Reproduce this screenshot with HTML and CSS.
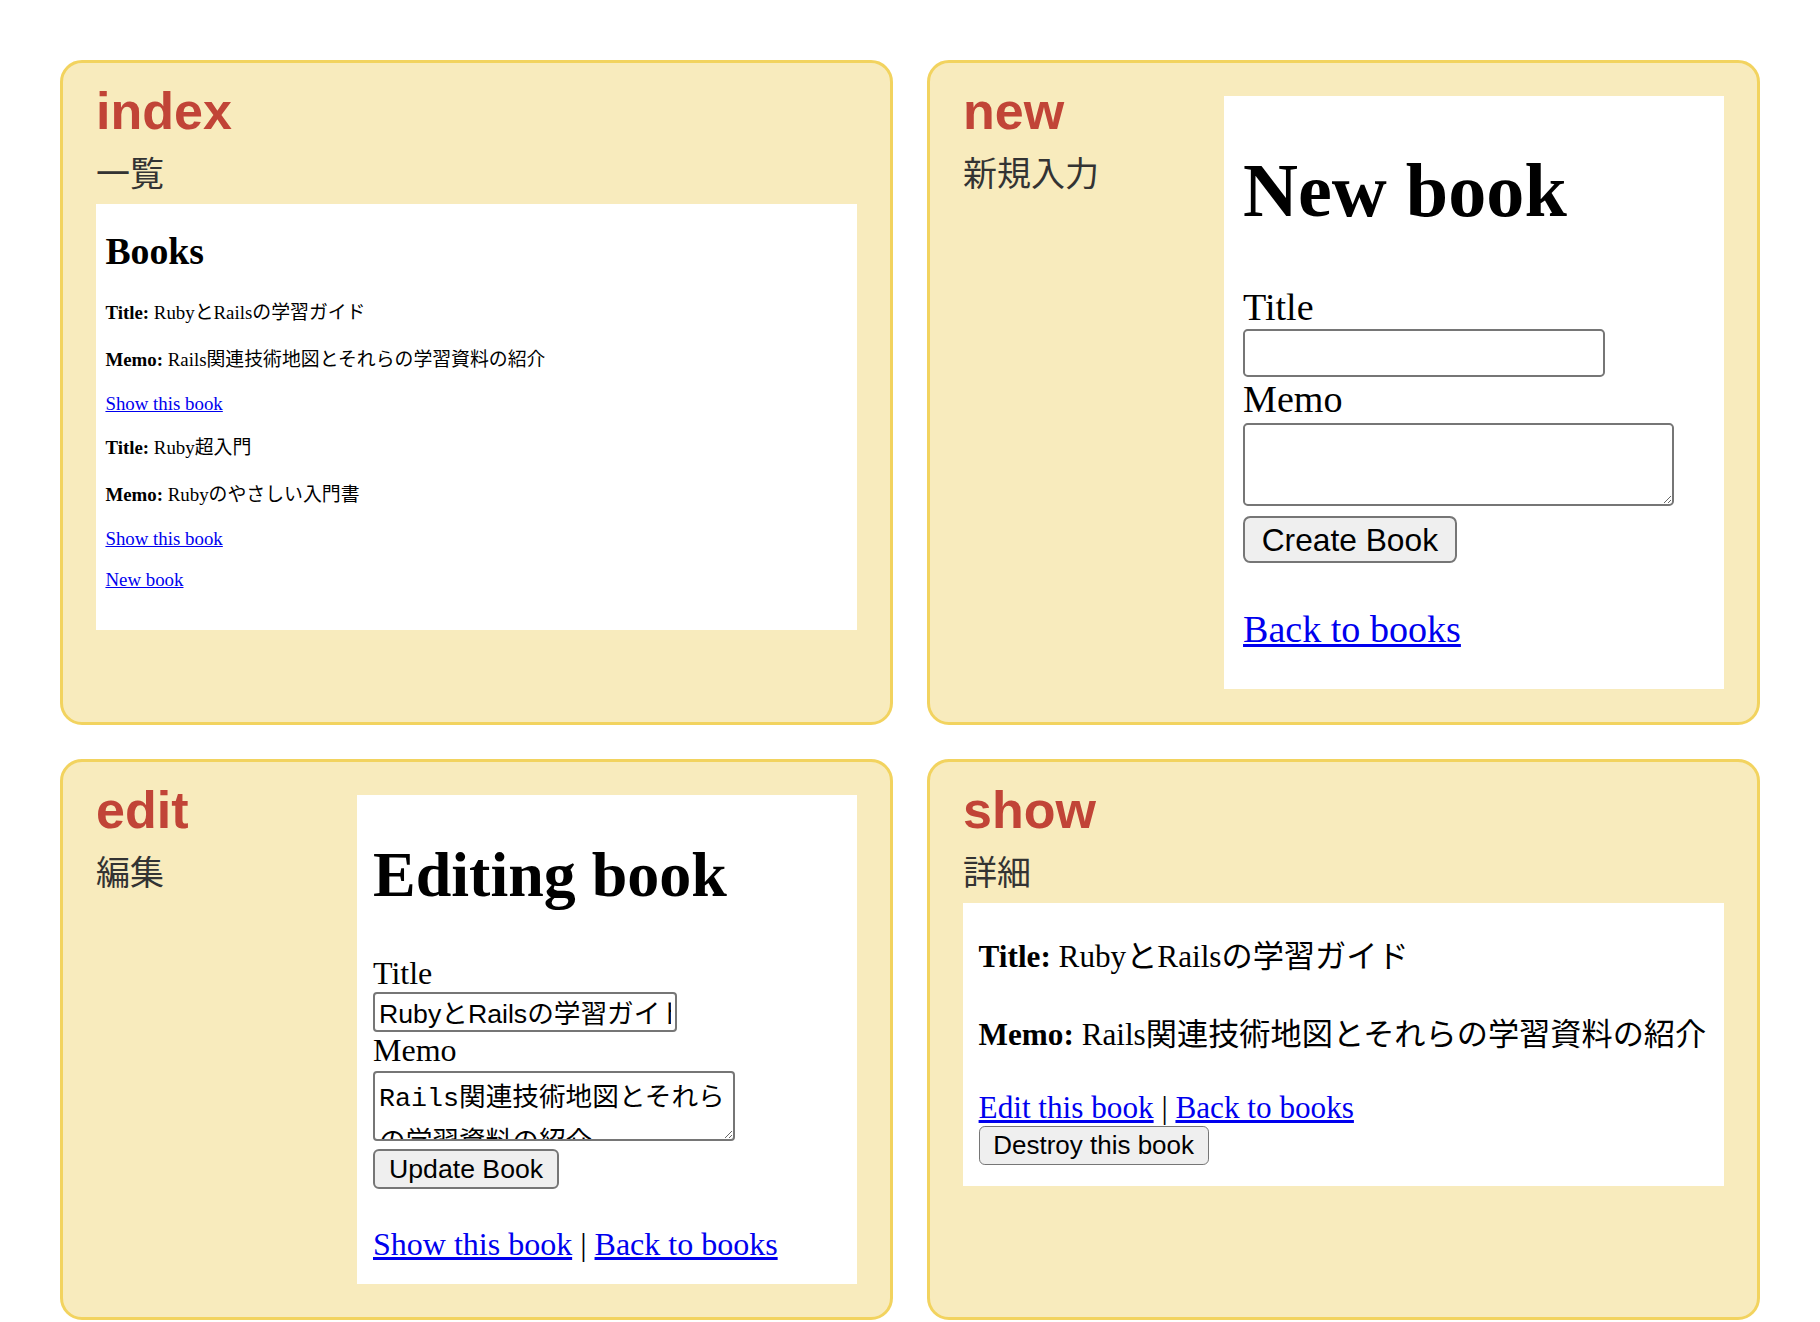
FILE: index.html
```html
<!DOCTYPE html>
<html lang="ja">
<head>
<meta charset="utf-8">
<title>Books scaffold pages</title>
<link rel="stylesheet" href="styles.css">
</head>
<body>
<main class="board">

  <section class="card">
    <header class="card-head">
      <h2 class="card-title">index</h2>
      <p class="card-sub">一覧</p>
    </header>
    <div class="panel panel-index">
      <div class="page page-index">
        <p class="notice"></p>
        <h1>Books</h1>
        <div class="books">
          <div class="book">
            <p class="line"><strong>Title:</strong> RubyとRailsの学習ガイド</p>
            <p class="line"><strong>Memo:</strong> Rails関連技術地図とそれらの学習資料の紹介</p>
          </div>
          <p><a href="#">Show this book</a></p>
          <div class="book">
            <p class="line"><strong>Title:</strong> Ruby超入門</p>
            <p class="line"><strong>Memo:</strong> Rubyのやさしい入門書</p>
          </div>
          <p><a href="#">Show this book</a></p>
        </div>
        <a href="#">New book</a>
      </div>
    </div>
  </section>

  <section class="card card-split">
    <header class="card-head">
      <h2 class="card-title">new</h2>
      <p class="card-sub">新規入力</p>
    </header>
    <div class="panel panel-new">
      <div class="page page-new">
        <h1>New book</h1>
        <form class="book-form" action="#">
          <div>
            <label class="field-label" for="new-title">Title</label>
            <input class="text-input" type="text" id="new-title">
          </div>
          <div>
            <label class="field-label" for="new-memo">Memo</label>
            <textarea class="text-area" id="new-memo"></textarea>
          </div>
          <div>
            <button class="btn" type="button">Create Book</button>
          </div>
        </form>
        <br>
        <div>
          <a href="#">Back to books</a>
        </div>
      </div>
    </div>
  </section>

  <section class="card card-split">
    <header class="card-head">
      <h2 class="card-title">edit</h2>
      <p class="card-sub">編集</p>
    </header>
    <div class="panel panel-edit">
      <div class="page page-edit">
        <h1>Editing book</h1>
        <form class="book-form" action="#">
          <div>
            <label class="field-label" for="edit-title">Title</label>
            <input class="text-input" type="text" id="edit-title" value="RubyとRailsの学習ガイド">
          </div>
          <div>
            <label class="field-label" for="edit-memo">Memo</label>
            <textarea class="text-area" id="edit-memo">Rails関連技術地図とそれらの学習資料の紹介</textarea>
          </div>
          <div>
            <button class="btn" type="button">Update Book</button>
          </div>
        </form>
        <br>
        <div>
          <a href="#">Show this book</a> | <a href="#">Back to books</a>
        </div>
      </div>
    </div>
  </section>

  <section class="card">
    <header class="card-head">
      <h2 class="card-title">show</h2>
      <p class="card-sub">詳細</p>
    </header>
    <div class="panel panel-show">
      <div class="page page-show">
        <p class="notice"></p>
        <div class="book">
          <p class="line"><strong>Title:</strong> RubyとRailsの学習ガイド</p>
          <p class="line"><strong>Memo:</strong> Rails関連技術地図とそれらの学習資料の紹介</p>
        </div>
        <div>
          <a href="#">Edit this book</a> | <a href="#">Back to books</a>
          <form class="button-to" action="#">
            <button class="btn" type="button">Destroy this book</button>
          </form>
        </div>
      </div>
    </div>
  </section>

</main>
</body>
</html>
```

FILE: styles.css
```css
html,
body {
  margin: 0;
  padding: 0;
  background: #ffffff;
}

body {
  font-family: "Liberation Sans", "Noto Sans CJK JP", sans-serif;
}

.board {
  display: grid;
  grid-template-columns: 1fr 1fr;
  gap: 34px;
  padding: 60px 60px 0;
}

.card {
  min-width: 0;
  background: #f8ebbd;
  border: 3px solid #f2d35f;
  border-radius: 22px;
  padding: 33px;
}

.card-split {
  display: flex;
  justify-content: space-between;
  align-items: flex-start;
}

.card-title {
  margin: 0;
  font-family: "Liberation Sans", "Noto Sans CJK JP", sans-serif;
  font-weight: bold;
  font-size: 52px;
  line-height: 31px;
  color: #c14437;
}

.card-sub {
  margin: 20px 0 8px;
  font-family: "Noto Sans CJK JP", sans-serif;
  font-size: 34px;
  line-height: normal;
  color: #333333;
}

/* screenshot-like panels */
.panel {
  background: #ffffff;
  overflow: hidden;
}

.panel-index {
  height: 426px;
}

.panel-new {
  flex: none;
  width: 500px;
  height: 593px;
}

.panel-edit {
  flex: none;
  width: 500px;
  height: 489px;
}

.panel-show {
  height: 283px;
}

.page {
  padding: 0 8px;
  font-family: "Liberation Serif", "Noto Sans CJK JP", serif;
  font-size: 16px;
  color: #000000;
}

.page-index {
  zoom: 1.18;
}

.page-new {
  zoom: 2.38;
}

.page-edit {
  zoom: 2;
}

.page-show {
  zoom: 1.95;
}

.page h1 {
  margin: 21.44px 0;
  font-size: 32px;
  font-weight: bold;
}

.page p {
  margin: 16px 0;
}

.page .line {
  white-space: nowrap;
  line-height: 24px;
}

.page a {
  color: #0000ee;
  text-decoration: underline;
}

.notice {
  color: green;
}

.book-form,
.button-to {
  margin: 0;
}

.field-label {
  display: block;
}

.text-input {
  display: block;
  box-sizing: border-box;
  width: 152px;
  height: 20px;
  margin: 0;
  padding: 1px 2px;
  border: 1px solid #767676;
  border-radius: 2px;
  background: #ffffff;
  color: #000000;
  font-family: "Liberation Sans", "Noto Sans CJK JP", sans-serif;
  font-size: 13.33px;
  line-height: 16px;
}

.text-area {
  display: block;
  box-sizing: border-box;
  width: 181px;
  height: 35px;
  margin: 1px 0 4px;
  padding: 2px;
  border: 1px solid #767676;
  border-radius: 2px;
  background: #ffffff;
  color: #000000;
  font-family: "Liberation Mono", "Noto Sans CJK JP", monospace;
  font-size: 13.33px;
  line-height: 22px;
  overflow: hidden;
  resize: both;
}

.btn {
  display: block;
  box-sizing: border-box;
  height: 20px;
  margin: 0;
  padding: 0 7px;
  border: 1px solid #767676;
  border-radius: 3px;
  background: #efefef;
  color: #000000;
  font-family: "Liberation Sans", "Noto Sans CJK JP", sans-serif;
  font-size: 13.33px;
  line-height: 16px;
}
```
